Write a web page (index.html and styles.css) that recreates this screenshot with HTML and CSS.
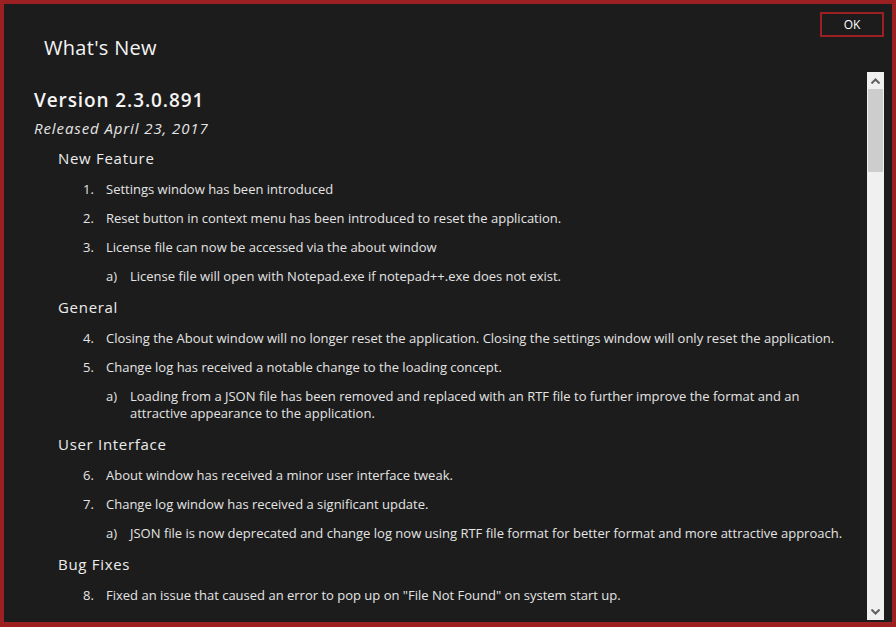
FILE: index.html
```html
<!DOCTYPE html>
<html lang="en">
<head>
  <meta charset="UTF-8">
  <title>What's New</title>
  <link rel="stylesheet" href="styles.css">
</head>
<body>

  <!-- Fenêtre principale -->
  <div class="window">

    <!-- Barre du haut : titre + bouton OK -->
    <div class="topbar">
      <h1 class="title">What's New</h1>
      <button class="btn-ok">OK</button>
    </div>

    <!-- Zone du journal des modifications -->
    <div class="panel">
      <div class="changelog">
        <h2 class="version">Version 2.3.0.891</h2>
        <p class="released">Released April 23, 2017</p>

        <h3 class="section">New Feature</h3>
        <div class="item"><span class="num">1.</span><span>Settings window has been introduced</span></div>
        <div class="item"><span class="num">2.</span><span>Reset button in context menu has been introduced to reset the application.</span></div>
        <div class="item"><span class="num">3.</span><span>License file can now be accessed via the about window</span></div>
        <div class="item sub"><span class="num">a)</span><span>License file will open with Notepad.exe if notepad++.exe does not exist.</span></div>

        <h3 class="section">General</h3>
        <div class="item"><span class="num">4.</span><span>Closing the About window will no longer reset the application. Closing the settings window will only reset the application.</span></div>
        <div class="item"><span class="num">5.</span><span>Change log has received a notable change to the loading concept.</span></div>
        <div class="item sub"><span class="num">a)</span><span>Loading from a JSON file has been removed and replaced with an RTF file to further improve the format and an attractive appearance to the application.</span></div>

        <h3 class="section">User Interface</h3>
        <div class="item"><span class="num">6.</span><span>About window has received a minor user interface tweak.</span></div>
        <div class="item"><span class="num">7.</span><span>Change log window has received a significant update.</span></div>
        <div class="item sub"><span class="num">a)</span><span>JSON file is now deprecated and change log now using RTF file format for better format and more attractive approach.</span></div>

        <h3 class="section">Bug Fixes</h3>
        <div class="item"><span class="num">8.</span><span>Fixed an issue that caused an error to pop up on "File Not Found" on system start up.</span></div>
      </div>

      <!-- Barre de défilement -->
      <div class="scrollbar">
        <div class="arrow">
          <svg width="9" height="6" viewBox="0 0 9 6"><path d="M0.5 5.5 L4.5 1.5 L8.5 5.5" fill="none" stroke="#606060" stroke-width="2"/></svg>
        </div>
        <div class="track"><div class="thumb"></div></div>
        <div class="arrow">
          <svg width="9" height="6" viewBox="0 0 9 6"><path d="M0.5 0.5 L4.5 4.5 L8.5 0.5" fill="none" stroke="#606060" stroke-width="2"/></svg>
        </div>
      </div>
    </div>

  </div>

</body>
</html>
```

FILE: styles.css
```css
/* Base de la page */
html, body {
  margin: 0;
  padding: 0;
  background: #1c1c1c;
}

body {
  font-family: "Open Sans", "Noto Sans", sans-serif;
  color: #e4e4e4;
}

/* Fenêtre avec bordure rouge */
.window {
  box-sizing: border-box;
  width: 896px;
  height: 627px;
  border: 4px solid #9c1f22;
  border-bottom-width: 5px;
  background: #1c1c1c;
  display: flex;
  flex-direction: column;
  overflow: hidden;
}

/* Barre du haut */
.topbar {
  display: flex;
  justify-content: space-between;
  align-items: flex-start;
  height: 68px;
  padding: 8px 8px 0 40px;
  box-sizing: border-box;
}

.title {
  margin: 23px 0 0 0;
  font-size: 20px;
  font-weight: normal;
  line-height: 26px;
  letter-spacing: 0.3px;
  color: #f4f4f4;
}

.btn-ok {
  width: 64px;
  height: 25px;
  background: #1c1c1c;
  border: 2px solid #9c1f22;
  color: #ffffff;
  font-family: "Open Sans", sans-serif;
  font-size: 12px;
  padding: 0;
}

/* Zone de contenu */
.panel {
  flex: 1;
  display: flex;
  padding-right: 8px;
  min-height: 0;
}

.changelog {
  flex: 1;
  padding: 15px 0 0 30px;
  overflow: hidden;
}

.version {
  margin: 0;
  font-size: 19px;
  font-weight: 600;
  line-height: 26px;
  letter-spacing: 0.9px;
  color: #f4f4f4;
}

.released {
  margin: 3px 0 0 0;
  font-size: 15px;
  font-style: italic;
  line-height: 24px;
  letter-spacing: 0.9px;
  color: #e4e4e4;
}

.section {
  margin: 0 0 12px 24px;
  font-size: 15px;
  font-weight: normal;
  line-height: 21px;
  letter-spacing: 0.7px;
  color: #ececec;
}

.released + .section {
  margin-top: 8px;
}

/* Lignes de liste */
.item {
  display: flex;
  margin: 0 0 12px 49px;
  font-size: 13px;
  line-height: 17px;
  padding-right: 12px;
}

.item .num {
  flex: none;
  width: 23px;
}

.item.sub {
  margin-left: 72px;
}

.item.sub .num {
  width: 24px;
}

/* Barre de défilement */
.scrollbar {
  width: 17px;
  display: flex;
  flex-direction: column;
  background: #f0f0f0;
  margin-bottom: 2px;
}

.arrow {
  height: 17px;
  display: flex;
  align-items: center;
  justify-content: center;
}

.track {
  flex: 1;
  padding: 0 1px;
}

.thumb {
  height: 83px;
  background: #cdcdcd;
}
```
